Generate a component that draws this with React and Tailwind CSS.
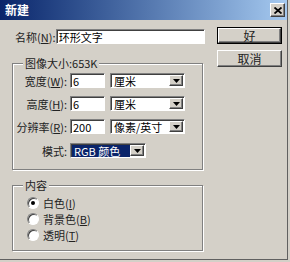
import React from "react";

const font = { fontFamily: '"Noto Sans CJK SC", "Liberation Sans", sans-serif' };

function Sunken({ className = "", children }) {
  return (
    <div
      className={
        "flex items-center border border-t-[#808080] border-l-[#808080] border-b-white border-r-white shadow-[inset_1px_1px_0_#404040] " +
        className
      }
    >
      {children}
    </div>
  );
}

function Arrow() {
  return (
    <div className="ml-auto mr-[1px] flex h-[11px] w-[14px] shrink-0 items-center justify-center border border-t-white border-l-white border-b-[#404040] border-r-[#404040] bg-[#d4d0c8] shadow-[inset_-1px_-1px_0_#808080]">
      <svg width="7" height="4" viewBox="0 0 7 4">
        <path d="M0 0h7L3.5 4z" fill="#000" />
      </svg>
    </div>
  );
}

function Select({ value, width, selected }) {
  return (
    <Sunken className={"h-[15px] bg-white " + width}>
      <span
        className={
          "ml-[1px] whitespace-nowrap px-[2px] text-[11px] leading-[12px] " +
          (selected ? "w-[58px] bg-[#0a246a] text-white" : "text-black")
        }
      >
        {value}
      </span>
      <Arrow />
    </Sunken>
  );
}

function Row({ label, hot, children }) {
  return (
    <div className="flex h-[15px] items-center">
      <div className="w-[57px] whitespace-nowrap pr-[3px] text-right text-[11px] leading-[12px] text-[#222]">
        {label}
        {hot && (
          <>
            (<span className="underline">{hot}</span>)
          </>
        )}
        :
      </div>
      {children}
    </div>
  );
}

function Group({ title, className = "", children }) {
  return (
    <div
      className={
        "relative ml-[12px] w-[191px] border border-[#808080] shadow-[1px_1px_0_#fff,inset_1px_1px_0_#fff] " +
        className
      }
    >
      <span className="absolute left-[10px] top-[-8px] whitespace-nowrap bg-[#d4d0c8] px-[2px] text-[11px] leading-[14px] text-[#222]">
        {title}
      </span>
      {children}
    </div>
  );
}

function Radio({ label, hot, checked }) {
  return (
    <div className="flex h-[16px] items-center pl-[14px]">
      <div className="flex h-[12px] w-[12px] items-center justify-center rounded-full border border-t-[#808080] border-l-[#808080] border-b-white border-r-white bg-white shadow-[inset_1px_1px_0_#404040]">
        {checked && <div className="h-[4px] w-[4px] rounded-full bg-black" />}
      </div>
      <span className="ml-[4px] whitespace-nowrap text-[11px] leading-[12px] text-[#222]">
        {label}(<span className="underline">{hot}</span>)
      </span>
    </div>
  );
}

function Button({ children, isDefault }) {
  return (
    <div className={isDefault ? "border border-black" : ""}>
      <div
        className={
          "flex items-center justify-center border border-t-white border-l-white border-b-[#404040] border-r-[#404040] shadow-[inset_-1px_-1px_0_#808080] text-[12px] leading-[12px] text-[#222] " +
          (isDefault ? "h-[15px]" : "h-[17px]")
        }
      >
        {children}
      </div>
    </div>
  );
}

export default function App() {
  return (
    <div className="h-[262px] w-[290px] bg-[#d4d0c8]" style={font}>
      <div className="flex h-[260px] w-[288px] flex-col border-r border-b border-[#606060] bg-[#d4d0c8]">
        <div className="flex h-[20px] items-center justify-between bg-gradient-to-r from-[#0a246a] to-[#a6caf0] pl-[5px] pr-[2px]">
          <span className="text-[12px] font-bold leading-[12px] text-white">新建</span>
          <div className="flex h-[14px] w-[15px] items-center justify-center border border-t-white border-l-white border-b-[#404040] border-r-[#404040] bg-[#d4d0c8] shadow-[inset_-1px_-1px_0_#808080]">
            <svg width="8" height="7" viewBox="0 0 8 7">
              <path d="M0.5 0.5l7 6M7.5 0.5l-7 6" stroke="#000" strokeWidth="1.8" />
            </svg>
          </div>
        </div>

        <div className="flex">
          <div className="w-[205px]">
            <div className="mt-[9px] flex h-[15px] items-center pl-[15px]">
              <span className="w-[41px] whitespace-nowrap text-[11px] leading-[12px] text-[#222]">
                名称(<span className="underline">N</span>):
              </span>
              <Sunken className="h-[15px] w-[150px] bg-white">
                <span className="whitespace-nowrap pl-[2px] text-[11px] leading-[12px] text-black">环形文字</span>
              </Sunken>
            </div>

            <Group title="图像大小:653K" className="mt-[19px] h-[107px]">
              <div className="flex flex-col gap-[8px] pt-[9px]">
                <Row label="宽度" hot="W">
                  <Sunken className="h-[15px] w-[35px] bg-white">
                    <span className="pl-[2px] text-[11px] leading-[12px]">6</span>
                  </Sunken>
                  <div className="ml-[5px]">
                    <Select value="厘米" width="w-[75px]" />
                  </div>
                </Row>
                <Row label="高度" hot="H">
                  <Sunken className="h-[15px] w-[35px] bg-white">
                    <span className="pl-[2px] text-[11px] leading-[12px]">6</span>
                  </Sunken>
                  <div className="ml-[5px]">
                    <Select value="厘米" width="w-[75px]" />
                  </div>
                </Row>
                <Row label="分辨率" hot="R">
                  <Sunken className="h-[15px] w-[35px] bg-white">
                    <span className="pl-[2px] text-[11px] leading-[12px]">200</span>
                  </Sunken>
                  <div className="ml-[5px]">
                    <Select value="像素/英寸" width="w-[75px]" />
                  </div>
                </Row>
                <div className="mt-[1px]">
                  <Row label="模式">
                    <Select value="RGB 颜色" width="w-[76px]" selected />
                  </Row>
                </div>
              </div>
            </Group>

            <Group title="内容" className="mt-[15px] h-[66px]">
              <div className="flex flex-col pt-[9px]">
                <Radio label="白色" hot="I" checked />
                <Radio label="背景色" hot="B" />
                <Radio label="透明" hot="T" />
              </div>
            </Group>
          </div>

          <div className="ml-[12px] mt-[7px] flex w-[65px] flex-col gap-[6px]">
            <Button isDefault>好</Button>
            <Button>取消</Button>
          </div>
        </div>
      </div>
    </div>
  );
}
